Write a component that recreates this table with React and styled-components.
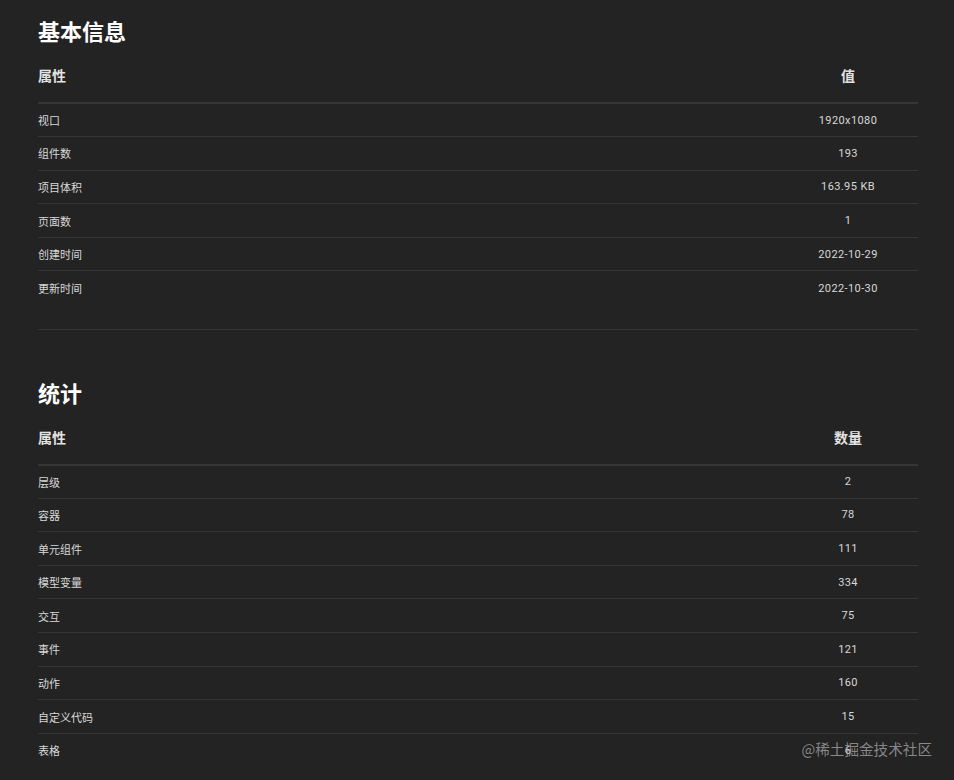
import React from 'react';
import styled, { createGlobalStyle } from 'styled-components';

const GlobalStyle = createGlobalStyle`
  html, body {
    margin: 0;
    padding: 0;
    background: #232323;
  }
  body {
    font-family: Roboto, "Noto Sans CJK SC", sans-serif;
    color: #dcdcdc;
  }
`

const basicInfo = [
  ['视口', '1920x1080'],
  ['组件数', '193'],
  ['项目体积', '163.95 KB'],
  ['页面数', '1'],
  ['创建时间', '2022-10-29'],
  ['更新时间', '2022-10-30'],
]

const stats = [
  ['层级', '2'],
  ['容器', '78'],
  ['单元组件', '111'],
  ['模型变量', '334'],
  ['交互', '75'],
  ['事件', '121'],
  ['动作', '160'],
  ['自定义代码', '15'],
  ['表格', '6'],
]

const Page = styled.div`
  padding: 16px 36px 0 38px;
  height: 780px;
  box-sizing: border-box;
  overflow: hidden;
  position: relative;
`
const Section = styled.section`
  display: flex;
  flex-direction: column;
`
const Title = styled.h2`
  margin: 0;
  height: 32px;
  line-height: 28px;
  font-family: "Noto Sans CJK SC", sans-serif;
  font-size: 22px;
  font-weight: 700;
  color: #ffffff;
`
const Table = styled.table`
  width: 880px;
  border-collapse: collapse;
  table-layout: fixed;
`
const HeadCell = styled.th`
  height: 54px;
  padding: 0;
  text-align: ${p => p.$align || 'left'};
  font-family: "Noto Sans CJK SC", sans-serif;
  font-size: 14px;
  font-weight: 700;
  color: #e2e2e2;
  border-bottom: 2px solid #363636;
  vertical-align: middle;
  width: ${p => p.$width || 'auto'};
`
const Row = styled.tr`
  height: 33.6px;
  & + & td {
    border-top: 1px solid #363636;
  }
`
const Cell = styled.td`
  padding: 0;
  text-align: ${p => p.$align || 'left'};
  font-family: Roboto, "Noto Sans CJK SC", sans-serif;
  font-size: 11px;
  letter-spacing: ${p => p.$align === 'center' ? '0.4px' : '0'};
  color: #d8d8d8;
  vertical-align: middle;
`
const Divider = styled.hr`
  width: 880px;
  margin: 24px 0 48px;
  border: 0;
  border-top: 1px solid #363636;
`
const Watermark = styled.div`
  position: absolute;
  right: 22px;
  top: 738px;
  font-family: "Noto Sans CJK SC", sans-serif;
  font-size: 14.6px;
  color: rgba(170, 170, 170, 0.75);
  pointer-events: none;
`

const InfoTable = ({ title, valueLabel, rows }) => (
  <Section>
    <Title>{title}</Title>
    <Table>
      <thead>
        <tr>
          <HeadCell>属性</HeadCell>
          <HeadCell $align="center" $width="140px">{valueLabel}</HeadCell>
        </tr>
      </thead>
      <tbody>
        {rows.map(([k, v]) => (
          <Row key={k}>
            <Cell>{k}</Cell>
            <Cell $align="center">{v}</Cell>
          </Row>
        ))}
      </tbody>
    </Table>
  </Section>
)

export default function App() {
  return (
    <Page>
      <GlobalStyle />
      <InfoTable title="基本信息" valueLabel="值" rows={basicInfo} />
      <Divider />
      <InfoTable title="统计" valueLabel="数量" rows={stats} />
      <Watermark>@稀土掘金技术社区</Watermark>
    </Page>
  )
}
